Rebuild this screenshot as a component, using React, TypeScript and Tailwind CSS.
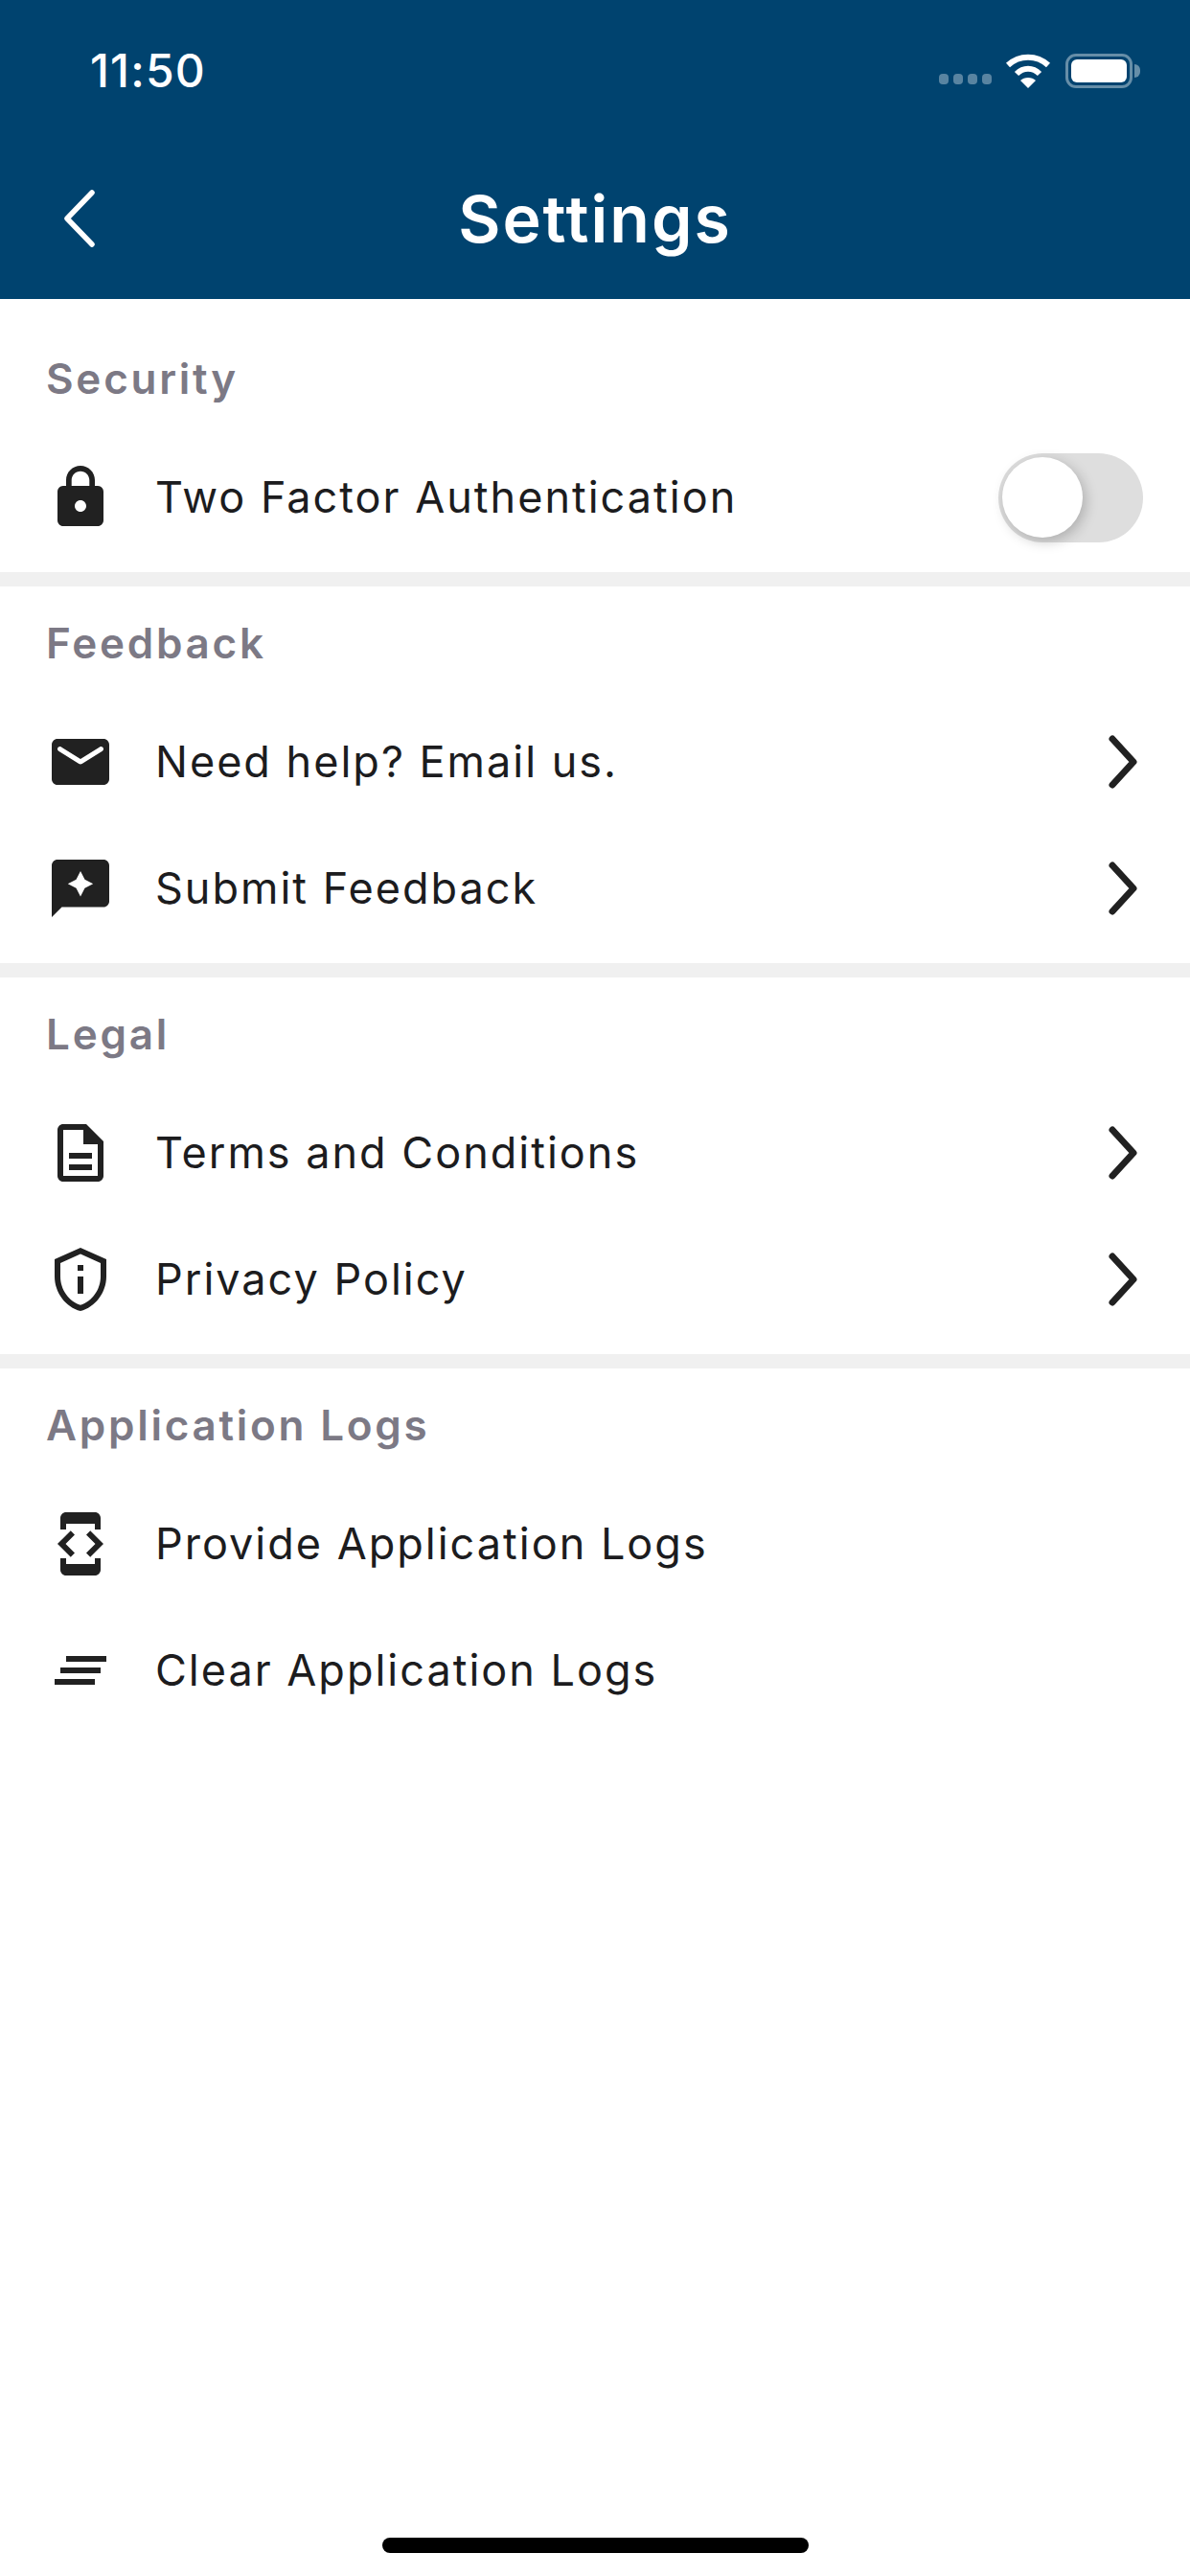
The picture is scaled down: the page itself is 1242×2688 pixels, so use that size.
import React from 'react';

const icons = {
  lock: 'M18 8h-1V6c0-2.76-2.24-5-5-5S7 3.24 7 6v2H6c-1.1 0-2 .9-2 2v10c0 1.1.9 2 2 2h12c1.1 0 2-.9 2-2V10c0-1.1-.9-2-2-2zm-6 9c-1.1 0-2-.9-2-2s.9-2 2-2 2 .9 2 2-.9 2-2 2zm3.1-9H8.9V6c0-1.71 1.39-3.1 3.1-3.1 1.71 0 3.1 1.39 3.1 3.1v2z',
  mail: 'M20 4H4c-1.1 0-1.99.9-1.99 2L2 18c0 1.1.9 2 2 2h16c1.1 0 2-.9 2-2V6c0-1.1-.9-2-2-2zm-.4 4.25l-7.07 4.42c-.32.2-.74.2-1.06 0L4.4 8.25c-.25-.16-.4-.43-.4-.72 0-.67.73-1.07 1.3-.72L12 11l6.7-4.19c.57-.35 1.3.05 1.3.72 0 .29-.15.56-.4.72z',
  feedback: 'M20 2H4c-1.1 0-2 .9-2 2v18l3.5-3.5H20c1.1 0 2-.9 2-2V4c0-1.1-.9-2-2-2zM12 6l1.5 2.9 2.9 1.5-2.9 1.5-1.5 2.9-1.5-2.9-2.9-1.5 2.9-1.5z',
  doc: 'M8 16h8v2H8zm0-4h8v2H8zm6-10H6c-1.1 0-2 .9-2 2v16c0 1.1.89 2 1.99 2H18c1.1 0 2-.9 2-2V8l-6-6zm4 18H6V4h7v5h5v11z',
  shield: 'M12 3.19l7 3.11V11c0 4.52-2.98 8.69-7 9.93-4.02-1.24-7-5.41-7-9.93V6.3l7-3.11M12 1L3 5v6c0 5.55 3.84 10.74 9 12 5.16-1.26 9-6.45 9-12V5l-9-4zm-1 6h2v2h-2zm0 4h2v6h-2z',
  dev: 'M7 5h10v2h2V3c0-1.1-.9-1.99-2-1.99L7 1c-1.1 0-2 .9-2 2v4h2V5zm8.41 11.59L20 12l-4.59-4.59L14 8.83 17.17 12 14 15.17l1.41 1.42zM10 15.17L6.83 12 10 8.83 8.59 7.41 4 12l4.59 4.59L10 15.17zM17 19H7v-2H5v4c0 1.1.9 2 2 2h10c1.1 0 2-.9 2-2v-4h-2v2z',
  clear: 'M5 13h14v-2H5v2zm-2 4h14v-2H3v2zM7 7v2h14V7H7z',
};

function Icon({ d }: { d: string }) {
  return (
    <svg viewBox="0 0 24 24" className="w-[72px] h-[72px] shrink-0 fill-[#212121]" fillRule="evenodd">
      <path d={d} />
    </svg>
  );
}

function Chevron() {
  return (
    <svg viewBox="0 0 38 60" className="w-[38px] h-[60px]" fill="none" stroke="#212121" strokeWidth="7" strokeLinecap="round" strokeLinejoin="round">
      <path d="M6 6 L28 30 L6 54" />
    </svg>
  );
}

function Toggle() {
  return (
    <div className="w-[151px] h-[93px] rounded-full bg-[#dedede] p-[4px] flex items-center">
      <div className="w-[84px] h-[84px] rounded-full bg-white shadow-[3px_4px_14px_rgba(0,0,0,0.22)]" />
    </div>
  );
}

function Row({ icon, label, right }: { icon: string; label: string; right?: React.ReactNode }) {
  return (
    <div className="h-[132px] flex items-center pl-[48px] pr-[49px]">
      <Icon d={icon} />
      <span className="ml-[42px] flex-1 text-[45px] tracking-[2px] text-[#1c1c1e]">{label}</span>
      {right}
    </div>
  );
}

function Section({ title, first, last, children }: { title: string; first?: boolean; last?: boolean; children: React.ReactNode }) {
  return (
    <section className={last ? '' : 'pb-[12px] border-b-[15px] border-[#f0f0f0]'}>
      <div className={`flex items-center px-[48px] text-[44px] font-semibold tracking-[2.75px] text-[#7c7985] ${first ? 'h-[141px] pt-[24px]' : 'h-[117px]'}`}>
        {title}
      </div>
      {children}
    </section>
  );
}

export default function App() {
  return (
    <div className="w-[1242px] h-[2688px] bg-white flex flex-col font-['Inter',sans-serif]">
      <header className="h-[312px] shrink-0 bg-[#00436f] flex flex-col text-white">
        <div className="h-[148px] flex items-center justify-between pl-[94px] pr-[60px]">
          <span className="text-[48px] font-medium tracking-[1.2px]">11:50</span>
          <div className="flex items-end">
            <div className="flex gap-[5px] mb-[4px] mr-[14px]">
              <div className="w-[10px] h-[11px] rounded-[4px] bg-white/35" />
              <div className="w-[10px] h-[11px] rounded-[4px] bg-white/35" />
              <div className="w-[10px] h-[11px] rounded-[4px] bg-white/35" />
              <div className="w-[10px] h-[11px] rounded-[4px] bg-white/35" />
            </div>
            <svg viewBox="0 0 48 36" className="w-[48px] h-[36px] mr-[15px]" fill="none" stroke="#fff" strokeWidth="6">
              <path d="M3 12 C15 1 33 1 45 12" />
              <path d="M12 21 C19 14 29 14 36 21" />
              <path d="M24 36 L16 28 C20 24 28 24 32 28 Z" fill="#fff" stroke="none" />
            </svg>
            <div className="relative w-[70px] h-[36px] rounded-[11px] border-[3px] border-white/40 p-[3px]">
              <div className="w-full h-full rounded-[6px] bg-white" />
              <div className="absolute left-[69px] top-[8px] w-[6px] h-[14px] rounded-r-full bg-white/40" />
            </div>
          </div>
        </div>
        <div className="flex items-center justify-between pl-[64px] pr-[64px] h-[160px]">
          <svg viewBox="0 0 36 60" className="w-[36px] h-[60px]" fill="none" stroke="#fff" strokeWidth="5.5" strokeLinecap="round" strokeLinejoin="round">
            <path d="M32 3 L6 30 L32 57" />
          </svg>
          <span className="text-[68px] font-semibold tracking-[2px]">Settings</span>
          <div className="w-[36px]" />
        </div>
      </header>

      <Section title="Security" first>
        <Row icon={icons.lock} label="Two Factor Authentication" right={<Toggle />} />
      </Section>

      <Section title="Feedback">
        <Row icon={icons.mail} label="Need help? Email us." right={<Chevron />} />
        <Row icon={icons.feedback} label="Submit Feedback" right={<Chevron />} />
      </Section>

      <Section title="Legal">
        <Row icon={icons.doc} label="Terms and Conditions" right={<Chevron />} />
        <Row icon={icons.shield} label="Privacy Policy" right={<Chevron />} />
      </Section>

      <Section title="Application Logs" last>
        <Row icon={icons.dev} label="Provide Application Logs" />
        <Row icon={icons.clear} label="Clear Application Logs" />
      </Section>

      <div className="mt-auto h-[40px] flex justify-center">
        <div className="w-[445px] h-[16px] rounded-full bg-black" />
      </div>
    </div>
  );
}
